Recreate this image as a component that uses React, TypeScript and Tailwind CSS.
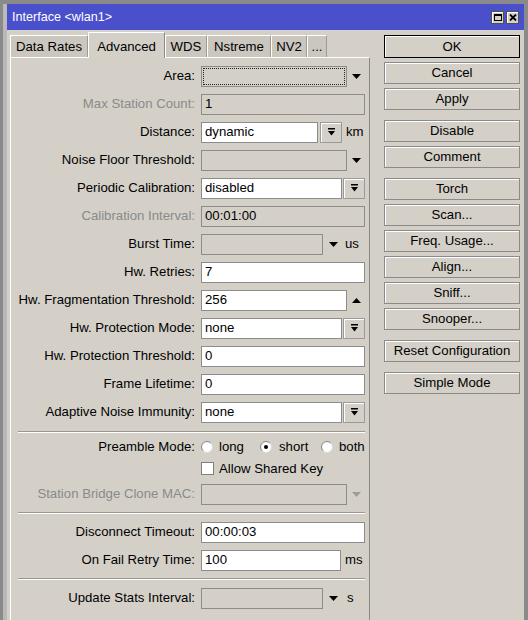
import React from "react";

type FieldProps = {
	w: string;
	value?: string;
	disabled?: boolean;
	focus?: boolean;
};

function Field({ w, value, disabled, focus }: FieldProps) {
	return (
		<div
			className={`${w} h-[21px] border border-[#8c8c8c] ${
				disabled ? "bg-[#d4d0c8]" : "bg-white"
			} ${focus ? "p-[1px]" : "px-[3px]"} flex items-center`}
		>
			{focus ? (
				<div className="w-full h-full border border-dotted border-[#222]" />
			) : (
				<span className="leading-none">{value}</span>
			)}
		</div>
	);
}

function Arrow({ up, dim, w = "w-[18px]" }: { up?: boolean; dim?: boolean; w?: string }) {
	return (
		<div className={`${w} h-[21px] flex items-center justify-center`}>
			<svg width="9" height="5" viewBox="0 0 9 5">
				<path d={up ? "M0 5 L9 5 L4.5 0 Z" : "M0 0 L9 0 L4.5 5 Z"} fill={dim ? "#9c9c9c" : "#000"} />
			</svg>
		</div>
	);
}

function DropBtn({ ml = "ml-[1px]" }: { ml?: string }) {
	return (
		<div
			className={`${ml} w-[22px] h-[21px] flex items-center justify-center bg-[#d4d0c8] border border-[#9a9a9a] shadow-[inset_1px_1px_0_#fff]`}
		>
			<svg width="7" height="8" viewBox="0 0 7 8">
				<rect x="0" y="0" width="7" height="1.5" fill="#000" />
				<path d="M0 3 L7 3 L3.5 7.5 Z" fill="#000" />
			</svg>
		</div>
	);
}

function Row({
	label,
	dim,
	h = "h-[28px]",
	children,
}: {
	label?: string;
	dim?: boolean;
	h?: string;
	children?: React.ReactNode;
}) {
	return (
		<div className={`flex items-center ${h}`}>
			<div className={`w-[184px] text-right whitespace-nowrap ${dim ? "text-[#8a8a8a]" : ""}`}>{label}</div>
			<div className="ml-[6px] flex items-center">{children}</div>
		</div>
	);
}

function Radio({ checked }: { checked?: boolean }) {
	return (
		<svg width="12" height="12" viewBox="0 0 12 12" className="shrink-0">
			<circle cx="6" cy="6" r="5.5" fill="#fff" stroke="#d8d8d8" />
			<path d="M2.1 9.9 A5.5 5.5 0 0 1 9.9 2.1" fill="none" stroke="#8a8a8a" />
			{checked && <circle cx="6" cy="6" r="2" fill="#000" />}
		</svg>
	);
}

function Sep({ mt }: { mt: string }) {
	return <div className={`${mt} ml-[7px] w-[347px] h-[2px] border-t border-[#9a9690] border-b border-b-white`} />;
}

const tabs = [
	{ name: "Data Rates", w: "w-[78px]" },
	{ name: "Advanced", w: "w-[77px]", active: true },
	{ name: "WDS", w: "w-[42px]" },
	{ name: "Nstreme", w: "w-[64px]" },
	{ name: "NV2", w: "w-[36px]" },
	{ name: "...", w: "w-[20px]" },
];

const buttonGroups = [
	["OK", "Cancel", "Apply"],
	["Disable", "Comment"],
	["Torch", "Scan...", "Freq. Usage...", "Align...", "Sniff...", "Snooper..."],
	["Reset Configuration"],
	["Simple Mode"],
];

function SideButton({ label }: { label: string }) {
	const isOk = label === "OK";
	return (
		<div
			className={`${
				isOk ? "h-[23px] border-black" : "h-[22px] border-[#8a8a8a]"
			} w-full border bg-[#d4d0c8] shadow-[inset_1px_1px_0_#fff] flex items-center justify-center`}
		>
			{label}
		</div>
	);
}

export default function App() {
	return (
		<div className="w-[528px] h-[620px] overflow-hidden bg-[#8a8a8a] pt-[4px] pl-[3px] pr-[4px] font-['Liberation_Sans',Arial,sans-serif] text-[13.2px] text-black">
			<div className="h-full flex flex-col bg-[#d4d0c8] border-l-4 border-[#b9b9b9]">
				{/* title bar */}
				<div className="h-[26px] bg-[#4a4fcb] flex items-center pl-[5px] pr-[5px] text-white text-[12.6px]">
					<span className="flex-1">Interface &lt;wlan1&gt;</span>
					<div className="flex gap-[2px]">
						<div className="w-[13px] h-[13px] bg-[#d4d0c8] border border-[#505050] shadow-[inset_1px_1px_0_#fff] flex items-center justify-center">
							<div className="w-[8px] h-[7px] border border-black border-t-2" />
						</div>
						<div className="w-[13px] h-[13px] bg-[#d4d0c8] border border-[#505050] shadow-[inset_1px_1px_0_#fff] flex items-center justify-center">
							<svg width="8" height="7" viewBox="0 0 8 7">
								<path d="M1 0.5 L7 6.5 M7 0.5 L1 6.5" stroke="#000" strokeWidth="1.8" />
							</svg>
						</div>
					</div>
				</div>

				<div className="flex flex-1 min-h-0 pt-[2px]">
					{/* left: tabs + panel */}
					<div className="w-[363px] pl-[3px] flex flex-col">
						<div className="h-[25px] flex items-end">
							{tabs.map((t) =>
								t.active ? (
									<div
										key={t.name}
										className={`${t.w} h-[26px] -mb-[1px] relative z-10 bg-[#d4d0c8] border-l border-t border-white border-r border-r-[#8a8a8a] flex justify-center pt-[4px]`}
									>
										{t.name}
									</div>
								) : (
									<div
										key={t.name}
										className={`${t.w} h-[22px] bg-[#cbc7bf] border-l border-t border-white border-r border-r-[#9e9a92] flex items-center justify-center`}
									>
										{t.name}
									</div>
								)
							)}
						</div>
						<div className="flex-1 border-l border-t border-white border-r border-r-[#8a8a8a] pt-[4px]">
							<Row label="Area:">
								<Field w="w-[146px]" disabled focus />
								<Arrow />
							</Row>
							<Row label="Max Station Count:" dim>
								<Field w="w-[164px]" value="1" disabled />
							</Row>
							<Row label="Distance:">
								<Field w="w-[117px]" value="dynamic" />
								<DropBtn ml="ml-[2px]" />
								<span className="ml-[4px]">km</span>
							</Row>
							<Row label="Noise Floor Threshold:">
								<Field w="w-[146px]" disabled />
								<Arrow />
							</Row>
							<Row label="Periodic Calibration:">
								<Field w="w-[141px]" value="disabled" />
								<DropBtn />
							</Row>
							<Row label="Calibration Interval:" dim>
								<Field w="w-[164px]" value="00:01:00" disabled />
							</Row>
							<Row label="Burst Time:">
								<Field w="w-[122px]" disabled />
								<Arrow w="w-[20px]" />
								<span className="ml-[2px]">us</span>
							</Row>
							<Row label="Hw. Retries:">
								<Field w="w-[164px]" value="7" />
							</Row>
							<Row label="Hw. Fragmentation Threshold:">
								<Field w="w-[146px]" value="256" />
								<Arrow up />
							</Row>
							<Row label="Hw. Protection Mode:">
								<Field w="w-[141px]" value="none" />
								<DropBtn />
							</Row>
							<Row label="Hw. Protection Threshold:">
								<Field w="w-[164px]" value="0" />
							</Row>
							<Row label="Frame Lifetime:">
								<Field w="w-[164px]" value="0" />
							</Row>
							<Row label="Adaptive Noise Immunity:">
								<Field w="w-[141px]" value="none" />
								<DropBtn />
							</Row>

							<Sep mt="mt-[5px]" />

							<div className="mt-[3px]">
								<Row label="Preamble Mode:" h="h-[22px]">
									<Radio />
									<span className="ml-[6px] w-[41px]">long</span>
									<Radio checked />
									<span className="ml-[7px] w-[42px] whitespace-nowrap">short</span>
									<Radio />
									<span className="ml-[6px] whitespace-nowrap">both</span>
								</Row>
							</div>
							<Row h="h-[22px]">
								<div className="w-[13px] h-[13px] bg-white border border-[#808080]" />
								<span className="ml-[5px]">Allow Shared Key</span>
							</Row>
							<Row label="Station Bridge Clone MAC:" dim>
								<Field w="w-[146px]" disabled />
								<Arrow dim />
							</Row>

							<Sep mt="mt-[4px]" />

							<div className="mt-[4px]">
								<Row label="Disconnect Timeout:">
									<Field w="w-[164px]" value="00:00:03" />
								</Row>
								<Row label="On Fail Retry Time:">
									<Field w="w-[140px]" value="100" />
									<span className="ml-[4px]">ms</span>
								</Row>
							</div>

							<Sep mt="mt-[4px]" />

							<div className="mt-[4px]">
								<Row label="Update Stats Interval:">
									<Field w="w-[122px]" disabled />
									<Arrow w="w-[20px]" />
									<span className="ml-[4px]">s</span>
								</Row>
							</div>
						</div>
					</div>

					{/* right: buttons */}
					<div className="ml-[14px] w-[136px] pt-[3px] flex flex-col gap-[10px]">
						{buttonGroups.map((g, i) => (
							<div key={i} className="flex flex-col gap-[4px]">
								{g.map((b) => (
									<SideButton key={b} label={b} />
								))}
							</div>
						))}
					</div>
				</div>
			</div>
		</div>
	);
}
